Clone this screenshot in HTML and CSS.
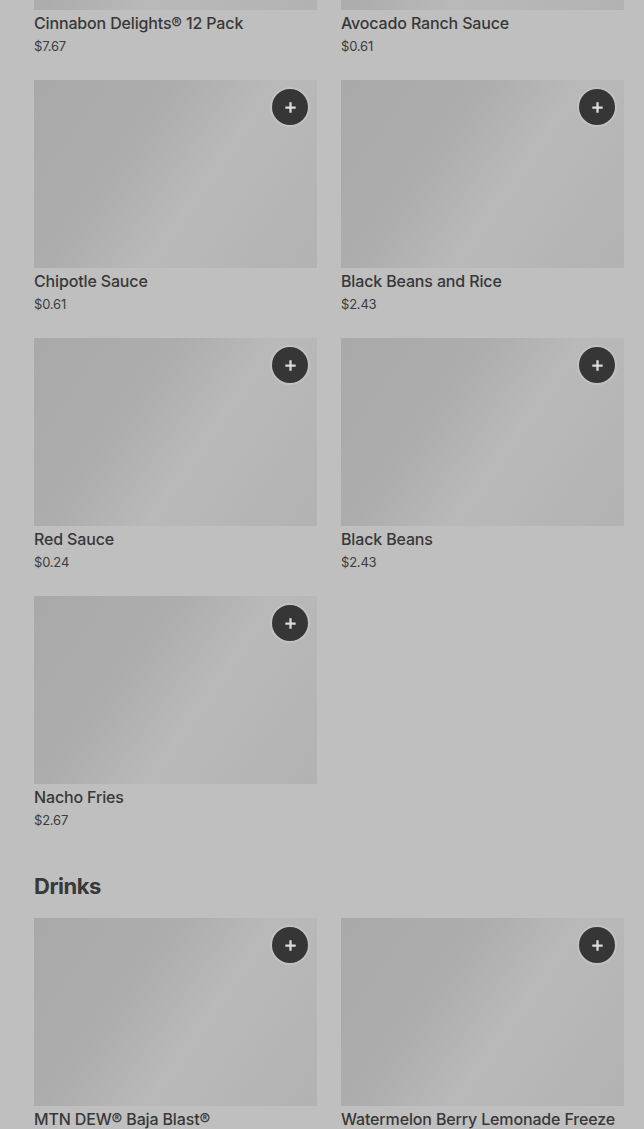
FILE: index.html
```html
<!DOCTYPE html>
<html lang="en">
<head>
<meta charset="utf-8">
<title>Menu</title>
<link rel="stylesheet" href="styles.css">
</head>
<body>
<main class="menu">
  <section class="section">
    <div class="grid">
      <div class="card"><div class="thumb"><button class="add" aria-label="Add"><svg viewBox="0 0 16 16"><path d="M8 2.5v11M2.5 8h11"/></svg></button></div><div class="name">Cinnabon Delights® 12 Pack</div><div class="price">$7.67</div></div>
      <div class="card"><div class="thumb"><button class="add" aria-label="Add"><svg viewBox="0 0 16 16"><path d="M8 2.5v11M2.5 8h11"/></svg></button></div><div class="name">Avocado Ranch Sauce</div><div class="price">$0.61</div></div>
      <div class="card"><div class="thumb"><button class="add" aria-label="Add"><svg viewBox="0 0 16 16"><path d="M8 2.5v11M2.5 8h11"/></svg></button></div><div class="name">Chipotle Sauce</div><div class="price">$0.61</div></div>
      <div class="card"><div class="thumb"><button class="add" aria-label="Add"><svg viewBox="0 0 16 16"><path d="M8 2.5v11M2.5 8h11"/></svg></button></div><div class="name">Black Beans and Rice</div><div class="price">$2.43</div></div>
      <div class="card"><div class="thumb"><button class="add" aria-label="Add"><svg viewBox="0 0 16 16"><path d="M8 2.5v11M2.5 8h11"/></svg></button></div><div class="name">Red Sauce</div><div class="price">$0.24</div></div>
      <div class="card"><div class="thumb"><button class="add" aria-label="Add"><svg viewBox="0 0 16 16"><path d="M8 2.5v11M2.5 8h11"/></svg></button></div><div class="name">Black Beans</div><div class="price">$2.43</div></div>
      <div class="card"><div class="thumb"><button class="add" aria-label="Add"><svg viewBox="0 0 16 16"><path d="M8 2.5v11M2.5 8h11"/></svg></button></div><div class="name">Nacho Fries</div><div class="price">$2.67</div></div>
    </div>
  </section>
  <section class="section drinks">
    <h2 class="heading">Drinks</h2>
    <div class="grid">
      <div class="card"><div class="thumb"><button class="add" aria-label="Add"><svg viewBox="0 0 16 16"><path d="M8 2.5v11M2.5 8h11"/></svg></button></div><div class="name">MTN DEW® Baja Blast®</div><div class="price">$2.43</div></div>
      <div class="card"><div class="thumb"><button class="add" aria-label="Add"><svg viewBox="0 0 16 16"><path d="M8 2.5v11M2.5 8h11"/></svg></button></div><div class="name">Watermelon Berry Lemonade Freeze</div><div class="price">$3.49</div></div>
    </div>
  </section>
</main>
</body>
</html>
```

FILE: styles.css
```css
html, body {
  margin: 0;
  padding: 0;
  background: #bfbfbf;
  height: 100%;
  overflow: hidden;
}
body {
  font-family: Inter, "Liberation Sans", sans-serif;
  color: #383838;
}
.menu {
  padding: 0 20px 0 34px;
  margin-top: -178px;
}
.grid {
  display: grid;
  grid-template-columns: 1fr 1fr;
  column-gap: 24px;
  row-gap: 25px;
}
.card {
  display: flex;
  flex-direction: column;
}
.thumb {
  position: relative;
  height: 188px;
  background: linear-gradient(125deg, #a9a9a9 0%, #adadad 35%, #b9b9b9 58%, #b6b6b6 78%, #b2b2b2 100%);
}
.add {
  position: absolute;
  top: 9px;
  right: 9px;
  width: 36px;
  height: 36px;
  border-radius: 50%;
  border: none;
  padding: 0;
  background: #363636;
  box-shadow: 0 0 0 2px rgba(255,255,255,0.15);
  display: flex;
  align-items: center;
  justify-content: center;
}
.add svg {
  width: 15px;
  height: 15px;
  stroke: #dcdcdc;
  stroke-width: 2.4;
  fill: none;
}
.name {
  margin-top: 3px;
  font-size: 16px;
  line-height: 20px;
  font-weight: 500;
  letter-spacing: -0.15px;
}
.price {
  margin-top: 4px;
  font-size: 13px;
  line-height: 18px;
  color: #3c3c3c;
  letter-spacing: -0.2px;
}
.drinks {
  margin-top: 41px;
}
.heading {
  margin: 0 0 16px;
  font-size: 22px;
  line-height: 32px;
  font-weight: 700;
  letter-spacing: -0.5px;
}
```
